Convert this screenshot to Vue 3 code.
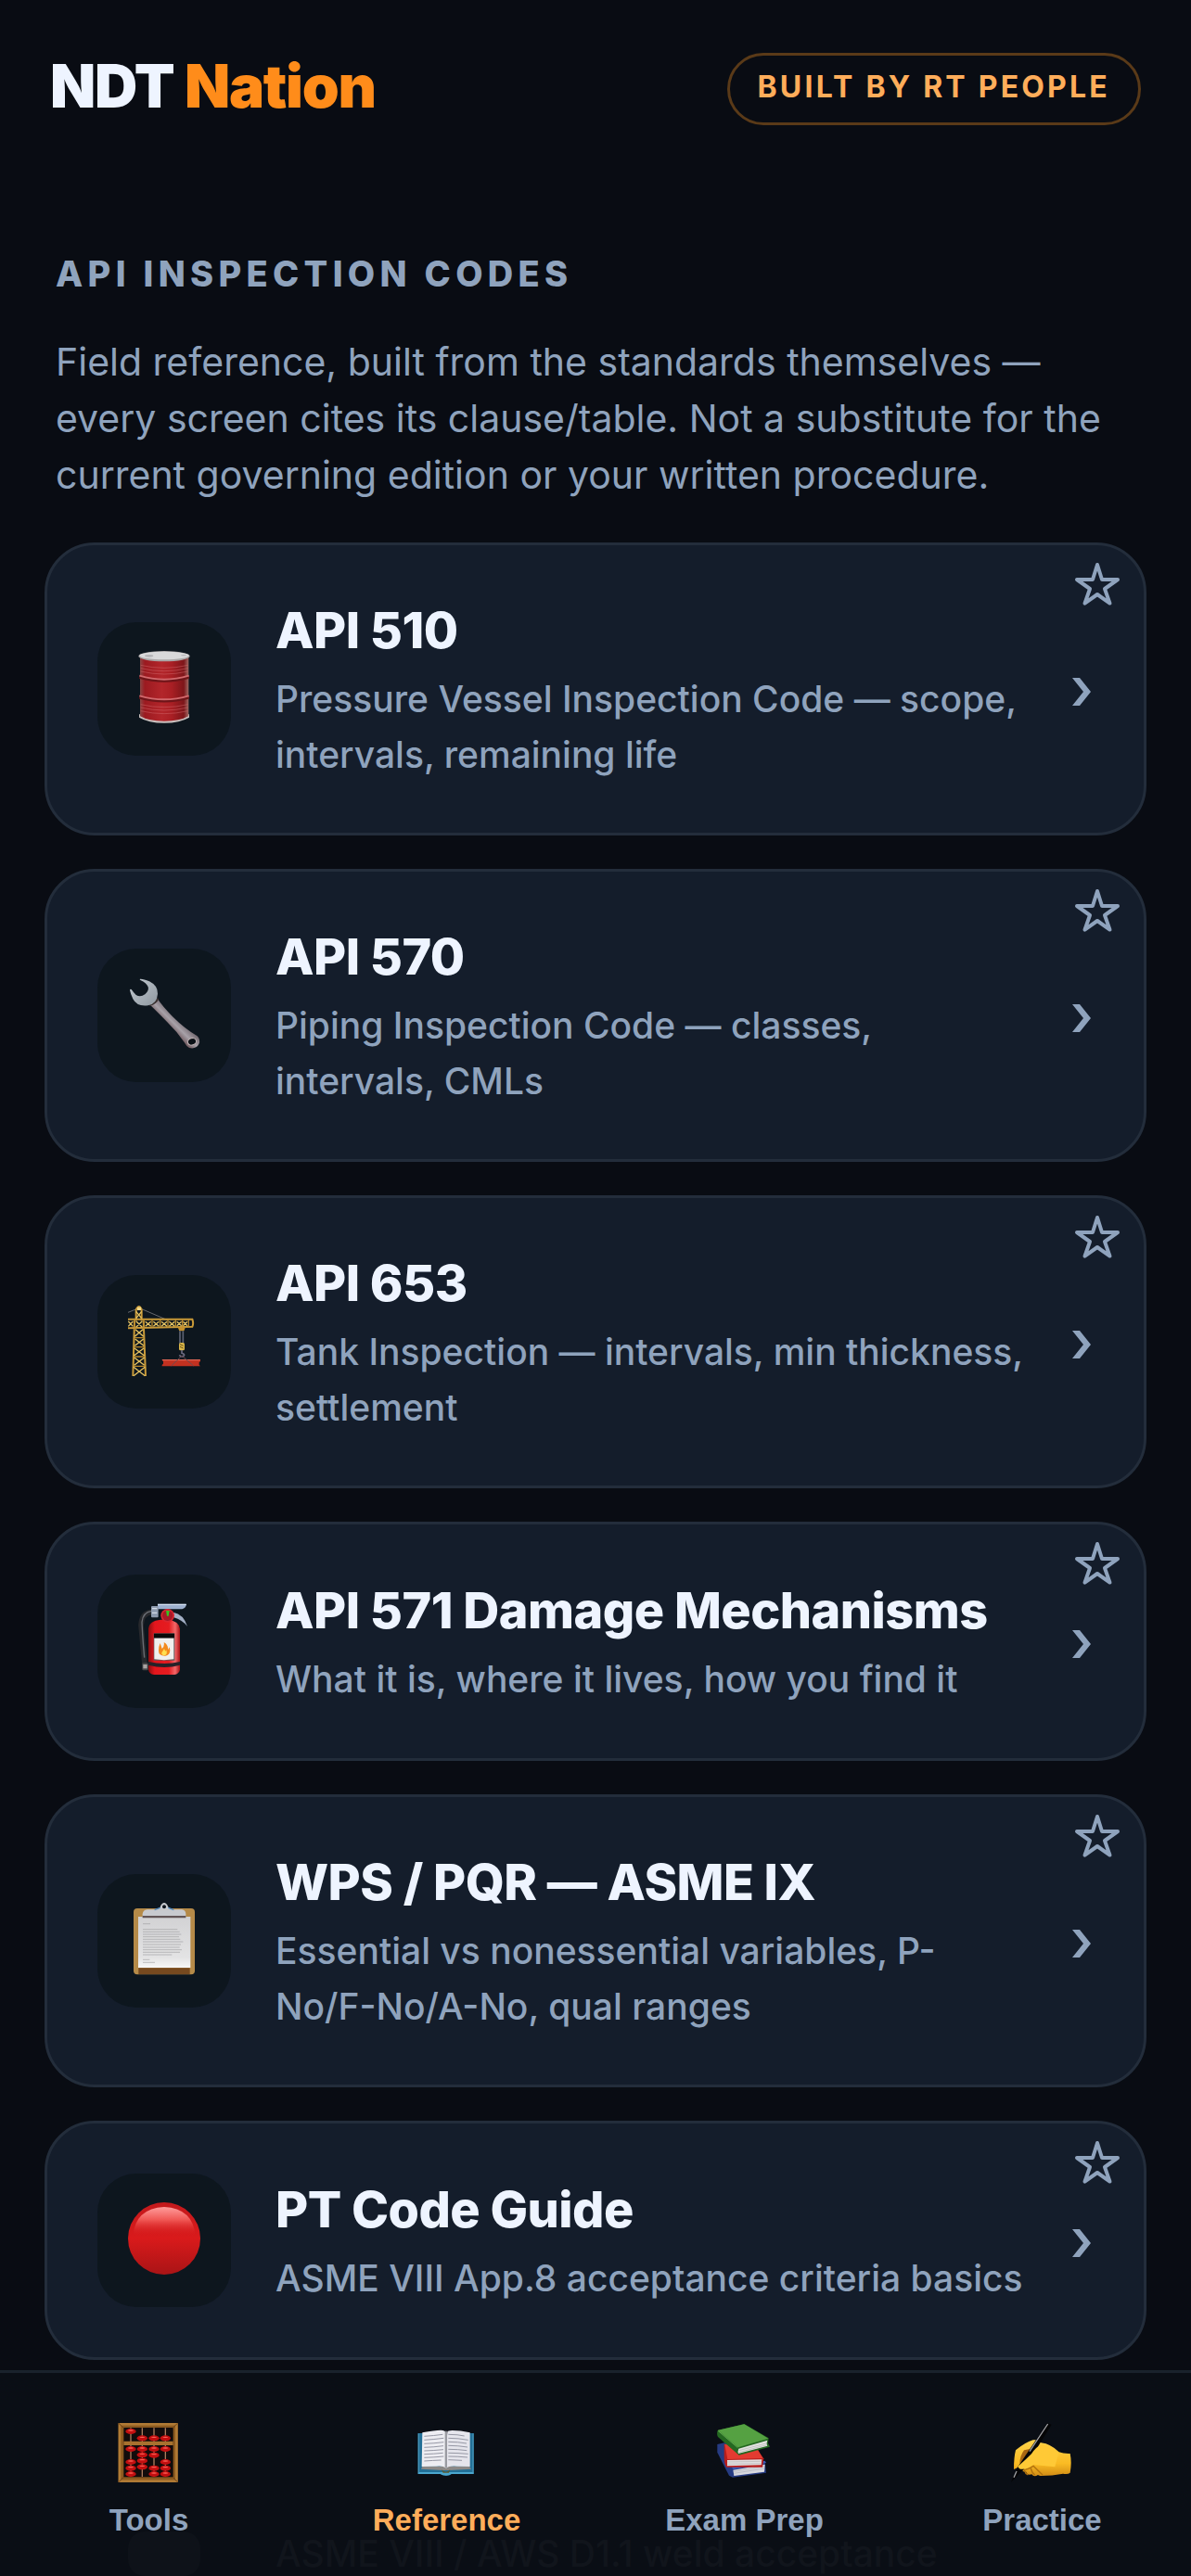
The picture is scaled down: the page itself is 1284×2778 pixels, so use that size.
<template>
    <div class="app">
        <header class="topbar">
            <h1 class="brand">NDT <span>Nation</span></h1>
            <span class="badge">BUILT BY RT PEOPLE</span>
        </header>

        <main class="content">
            <h2 class="section-title">API INSPECTION CODES</h2>
            <p class="intro">
                Field reference, built from the standards themselves — every screen cites its
                clause/table. Not a substitute for the current governing edition or your written procedure.
            </p>

            <ul class="cards">
                <li v-for="card in cards" :key="card.id" class="card">
                    <a class="card-link" :href="'#' + card.id">
                        <span class="tile">
                            <svg :viewBox="card.box" aria-hidden="true">
                                <g v-if="card.id === 'api-510'">
                                    <defs>
                                        <linearGradient id="drum" x1="0" x2="1" y1="0" y2="0">
                                            <stop offset="0" stop-color="#8b4544" />
                                            <stop offset="0.1" stop-color="#9b1a20" />
                                            <stop offset="0.45" stop-color="#b3262b" />
                                            <stop offset="0.65" stop-color="#a91f24" />
                                            <stop offset="0.9" stop-color="#7d161a" />
                                            <stop offset="1" stop-color="#a06a64" />
                                        </linearGradient>
                                    </defs>
                                    <path d="M330 604v10q30 18 81 18t81-18v-10z" fill="#c9bfbd" />
                                    <path d="M333 415h157v195q-28 16-79 16t-78-16z" fill="url(#drum)" />
                                    <g fill="none" stroke="#d06468" stroke-width="3" opacity="0.5">
                                        <path d="M335 445q76 18 153 0M335 455q76 18 153 0M335 465q76 18 153 0M335 572q76 18 153 0M335 582q76 18 153 0M335 593q76 18 153 0" />
                                    </g>
                                    <path d="M331 484q80 24 160 0M331 549q80 24 160 0" fill="none" stroke="#6e1519" stroke-width="9" />
                                    <path d="M331 479q80 24 160 0M331 544q80 24 160 0" fill="none" stroke="#d2686c" stroke-width="6" />
                                    <ellipse cx="411" cy="416" rx="83" ry="17" fill="#a9a5a5" />
                                    <ellipse cx="411" cy="414" rx="80" ry="13" fill="#d9d9da" />
                                    <ellipse cx="362" cy="415" rx="14" ry="4" fill="#b4b4b6" />
                                    <ellipse cx="474" cy="413" rx="9" ry="2" fill="#b4b4b6" />
                                </g>

                                <g v-else-if="card.id === 'api-570'">
                                    <defs>
                                        <linearGradient id="shaft" gradientUnits="userSpaceOnUse" x1="278" y1="330" x2="312" y2="296">
                                            <stop offset="0" stop-color="#6b5358" />
                                            <stop offset="0.5" stop-color="#a7a1a8" />
                                            <stop offset="1" stop-color="#746a71" />
                                        </linearGradient>
                                        <linearGradient id="jaw" x1="0" x2="1" y1="0" y2="1">
                                            <stop offset="0" stop-color="#c3cbd2" />
                                            <stop offset="1" stop-color="#8e979f" />
                                        </linearGradient>
                                    </defs>
                                    <path d="M214 250l26-18q14 22 48 57 40 40 80 63 12 12 5 26-9 17-31 12-10-6-16-18-25-36-55-65-34-35-57-57z" fill="url(#shaft)" />
                                    <path d="M213 252q22-6 28-22" fill="none" stroke="#39302f" stroke-width="6" />
                                    <path d="M183 167q10-1 30 8 28 14 27 40-2 32-31 38-36 5-49-21-8-18-10-29 1-5 5-2 6 9 15 18 14 8 29-2 14-12 10-24-5-13-25-22-3-2-1-4z" fill="url(#jaw)" />
                                    <ellipse cx="351" cy="370" rx="14" ry="11" fill="#0b1016" stroke="#c0b4b5" stroke-width="3" transform="rotate(-18 351 370)" />
                                </g>

                                <g v-else-if="card.id === 'api-653'">
                                    <path d="M144 163l33-13M186 151l86 37" fill="none" stroke="#66686d" stroke-width="3" />
                                    <path d="M170 190v-36q10-20 18 0v36M165 190l-5 179M194 190l7 179M144 185h208q5 15 0 24l-208 5" fill="none" stroke="#c99a38" stroke-width="6" />
                                    <g fill="none" stroke="#e6c463" stroke-width="4">
                                        <path d="M170 160l18 22M188 160l-18 22M168 218l26 23M192 218l-26 23M167 249l28 22M194 249l-28 22M165 279l32 24M195 279l-32 24M164 309l33 25M197 309l-33 25M162 340l37 28M199 340l-37 28" />
                                        <path d="M145 192l15 16M160 192l-15 16M170 191l20 20M190 191l-20 20M200 193l18 15M218 193l-18 15M226 193l18 15M244 193l-18 15M252 193l18 15M270 193l-18 15M277 193l18 15M295 193l-18 15M302 193l15 13M317 193l-15 13M322 193l14 13M336 193l-14 13" />
                                    </g>
                                    <path d="M166 214h28M165 245h31M164 275h33M163 306h35M162 337h37M165 186v26M195 186v26M222 186v25M248 186v24M273 186v24M298 186v23M320 186v23M340 186v23" fill="none" stroke="#b98a2e" stroke-width="4" />
                                    <path d="M174 146h12v10h-12z" fill="#f1d98a" />
                                    <path d="M305 211h25l-5 12h-15z" fill="#c4912c" />
                                    <path d="M312 223v42M322 223v42" stroke="#5d6272" stroke-width="5" />
                                    <rect x="309" y="261" width="18" height="25" rx="5" fill="#d9b64a" />
                                    <path d="M312 266l11 5M312 274l11 5" stroke="#6d5516" stroke-width="3" />
                                    <path d="M318 285v10q12 4 6 9-8 4-14-3" fill="none" stroke="#6b6a80" stroke-width="5" />
                                    <path d="M254 315h124v6l-4 4v8l4 4H254v-4l4-4v-8l-4-4z" fill="#c23120" />
                                    <path d="M255 317h122" stroke="#e2705d" stroke-width="3" />
                                    <path d="M318 303l-34 33M318 303l38 33" stroke="#6d4a50" stroke-width="3" />
                                </g>

                                <g v-else-if="card.id === 'api-571'">
                                    <defs>
                                        <linearGradient id="tank" x1="0" x2="1" y1="0" y2="0">
                                            <stop offset="0" stop-color="#8d0d10" />
                                            <stop offset="0.2" stop-color="#e3161d" />
                                            <stop offset="0.65" stop-color="#e51c20" />
                                            <stop offset="0.85" stop-color="#f2686a" />
                                            <stop offset="1" stop-color="#a80f14" />
                                        </linearGradient>
                                    </defs>
                                    <path d="M222 175q-34 2-36 44 6 60 12 125" fill="none" stroke="#26282c" stroke-width="17" />
                                    <path d="M220 172q-28 4-31 36 2 50 8 115" fill="none" stroke="#6b6e74" stroke-width="4" />
                                    <rect x="190" y="340" width="19" height="24" rx="4" fill="#49484a" />
                                    <rect x="193" y="345" width="13" height="13" fill="#a8a3a2" />
                                    <path d="M290 176q34 6 46 46-14-20-46-30z" fill="#a3afc5" />
                                    <path d="M240 150h93q-2 13-14 16h-79z" fill="#9db0ce" />
                                    <path d="M240 151h92" stroke="#d5e2f4" stroke-width="4" />
                                    <path d="M210 230q2-27 40-30h24q35 4 38 30v132q-3 13-18 16h-66q-16-3-18-16z" fill="url(#tank)" />
                                    <rect x="219" y="156" width="23" height="37" rx="3" fill="#8d9aae" />
                                    <path d="M222 164h16M222 178h16" stroke="#d1dae6" stroke-width="4" />
                                    <circle cx="272" cy="187" r="22" fill="#da2630" />
                                    <circle cx="272" cy="187" r="17" fill="#a81828" />
                                    <path d="M267 171h11l-3 17h-5z" fill="#36c421" />
                                    <path d="M210 336q52 12 102 0v11q-50 14-102 0z" fill="#262228" />
                                    <rect x="227" y="244" width="68" height="88" fill="#5b5b5d" />
                                    <path d="M228 245h66v14h-66z" fill="#090909" />
                                    <path d="M229 260h63v68q-32 5-63 0z" fill="#f0efed" />
                                    <path d="M244 288l4-12 6 18q9-9 6-21 15 8 13 25l5-9q7 24-13 28-22 1-22-16z" fill="#f38a1c" />
                                    <path d="M253 307l8-13 4 8 3-4q5 17-7 18-9-1-8-9z" fill="#ffdf4f" />
                                </g>

                                <g v-else-if="card.id === 'wps-pqr'">
                                    <defs>
                                        <linearGradient id="sheet" x1="0" x2="0" y1="0" y2="1">
                                            <stop offset="0" stop-color="#d2d2d4" />
                                            <stop offset="0.8" stop-color="#e3e3e4" />
                                            <stop offset="1" stop-color="#f7f7f7" />
                                        </linearGradient>
                                    </defs>
                                    <rect x="162" y="168" width="198" height="214" rx="12" fill="#b58a48" />
                                    <path d="M178 361h166v20H178z" fill="#76491f" />
                                    <rect x="177" y="195" width="169" height="165" fill="url(#sheet)" />
                                    <path d="M192 218h24M192 236h112M192 244h119M192 252h124M192 260h117M192 268h121M192 276h130M192 285h123M192 294h119M192 302h126M192 310h120M192 318h94M192 334h22M192 343h39" stroke="#a2a2a4" stroke-width="2" />
                                    <path d="M191 197v-10q1-14 15-15h112q13 1 13 15v10z" fill="#c8cacf" />
                                    <path d="M191 192h140v7H191z" fill="#625557" />
                                    <path d="M232 173q15-3 17-12 5-11 12-11t12 11q4 9 17 12z" fill="#c8cbd0" />
                                    <path d="M230 173l18-7M292 173l-18-7" stroke="#528bc2" stroke-width="4" />
                                    <circle cx="261" cy="163" r="6" fill="#0d151d" />
                                </g>

                                <g v-else>
                                    <defs>
                                        <linearGradient id="ball" x1="0" x2="0" y1="0" y2="1">
                                            <stop offset="0" stop-color="#c3191c" />
                                            <stop offset="0.5" stop-color="#d91a1b" />
                                            <stop offset="1" stop-color="#a91416" />
                                        </linearGradient>
                                        <linearGradient id="shine" x1="0" x2="0" y1="0" y2="1">
                                            <stop offset="0" stop-color="#ff9c9b" />
                                            <stop offset="0.45" stop-color="#f05754" />
                                            <stop offset="1" stop-color="#da1a1b" stop-opacity="0" />
                                        </linearGradient>
                                    </defs>
                                    <circle cx="261" cy="249" r="117" fill="url(#ball)" />
                                    <path d="M160 240q8-88 101-93 93 5 101 93z" fill="url(#shine)" />
                                </g>
                            </svg>
                        </span>
                        <span class="card-body">
                            <strong>{{ card.title }}</strong>
                            <span class="card-text">{{ card.text }}</span>
                        </span>
                        <svg class="chevron" viewBox="0 0 20 30" aria-hidden="true">
                            <path d="M0 0h8l12 15L8 30H0l12-15z" />
                        </svg>
                    </a>
                    <button class="star" type="button" :aria-label="'Save ' + card.title" @click="toggle(card.id)">
                        <svg :class="{ saved: saved.includes(card.id) }" viewBox="-27 -27 54 54" aria-hidden="true">
                            <path d="M0-23 5-7H22L8 3 13.500 18.600 0 9-13.500 18.600-8 3-22-7H-5z" />
                        </svg>
                    </button>
                </li>
            </ul>
        </main>

        <nav class="tabbar">
            <div class="peek" aria-hidden="true">
                <span class="peek-tile"></span>
                <span>ASME VIII / AWS D1.1 weld acceptance</span>
            </div>
            <a
                v-for="tab in tabs"
                :key="tab.id"
                :href="'#' + tab.id"
                class="tab"
                :class="{ active: tab.id === activeTab }"
                @click="activeTab = tab.id"
            >
                <svg :viewBox="tab.box" aria-hidden="true">
                    <g v-if="tab.id === 'tools'">
                        <rect x="51" y="69" width="192" height="192" fill="#8c5a20" />
                        <rect x="55" y="73" width="184" height="184" fill="none" stroke="#b07a35" stroke-width="8" />
                        <rect x="68" y="84" width="160" height="160" fill="#120c0b" />
                        <path d="M52 70l16 15M242 70l-15 15M52 260l16-16M242 260l-15-16" stroke="#6d4215" stroke-width="3" />
                        <path d="M91 85v158M128 85v158M166 85v158M203 85v158" stroke="#ac7b5c" stroke-width="4" />
                        <path d="M68 128h160v13H68z" fill="#a8712e" />
                        <g v-for="bead in beads" :key="bead.join()">
                            <ellipse :cx="bead[0]" :cy="bead[1]" rx="17" ry="9" fill="#c20f10" />
                            <ellipse :cx="bead[0]" :cy="bead[1] - 3" rx="9" ry="2" fill="#ff6257" />
                        </g>
                    </g>

                    <g v-else-if="tab.id === 'reference'">
                        <path d="M1020 102h180v132h-72q-5 5-17 5t-19-5h-72z" fill="#236f96" />
                        <path d="M1020 228h180v6h-72q-5 5-17 5t-19-5h-72z" fill="#4aa6cd" />
                        <path d="M1022 103v126M1198 103v126" stroke="#4594b8" stroke-width="4" />
                        <path d="M1030 218l4-9h152l6 9-70 4h-22z" fill="#8b8987" />
                        <path d="M1096 220q14 14 28 0l-4 10h-19z" fill="#5c5a2e" />
                        <path d="M1034 100q40-8 60-8 13 1 17 8v115q-11-9-32-6l-47 1z" fill="#ededf2" />
                        <path d="M1111 100q6-7 20-7 26 0 57 7v110l-42-1q-26-2-35 6z" fill="#e5e5ec" />
                        <path d="M1105 94q6 4 6 18v104q0-109 6-121z" fill="#77787f" />
                        <path d="M1107 98h7v116h-7z" fill="#9a9ba2" />
                        <path d="M1040 112q32-2 60-6M1040 124q32-2 63-6M1040 136q32-1 63-5M1040 148q32-1 62-5M1040 159q32-1 62-4M1040 170q32-1 61-4M1040 181q32-1 63-4M1040 192q28-2 55-3M1118 106q32 0 52 5M1118 118q32 0 64 6M1118 130q32 0 59 5M1118 142q32 0 62 5M1118 154q32 0 60 4M1118 166q32 0 64 3M1118 177q32 0 62 3M1118 188q24 1 44 2" fill="none" stroke="#9698a5" stroke-width="3" />
                    </g>

                    <g v-else-if="tab.id === 'exam'">
                        <path d="M68 138l26-6 128 66 4 32-108 15-12-6-38-75z" fill="#263b82" />
                        <path d="M113 210l109-19 4 7-106 21z" fill="#3f5bb4" />
                        <path d="M119 221l103-18-2 24-98 13z" fill="#d8d8de" />
                        <path d="M122 232l98-16M121 226l99-17" stroke="#adafb8" stroke-width="2" />
                        <path d="M90 137l103 13 25 34-4 28H98q-8-10-8-33z" fill="#b81e1c" />
                        <path d="M92 138l102 8 21 37-114 3z" fill="#e33b31" />
                        <path d="M100 189l112-2-2 18-110 3z" fill="#e1dfdf" />
                        <path d="M100 195l110-2M100 202l110-2" stroke="#b9b5b5" stroke-width="2" />
                        <path d="M69 93l86-21 79 46-2 16 6 12-100 27-68-59q-5-8-1-21z" fill="#246821" />
                        <path d="M70 92l85-19 78 46-98 29z" fill="#55a142" />
                        <path d="M137 152l93-27q-5 10 0 18l-94 25q-3-7 1-16z" fill="#e4e4e2" />
                        <path d="M138 158l91-24M137 164l92-24" stroke="#b2b5b1" stroke-width="2" />
                        <path d="M70 94l64 55" stroke="#79c160" stroke-width="2" />
                    </g>

                    <g v-else>
                        <defs>
                            <linearGradient id="hand" x1="0" x2="0" y1="0" y2="1">
                                <stop offset="0" stop-color="#ffd34b" />
                                <stop offset="0.65" stop-color="#fabb23" />
                                <stop offset="1" stop-color="#d18b15" />
                            </linearGradient>
                        </defs>
                        <path d="M1027 219q0-38 6-62 30-25 56-33 18-3 26 9 32 4 58 30 15 6 36 5 6 29 0 62-7 6-23 3-34 7-73 7-6-1-8-3-13 9-20-2-15 5-19-9-8 3-12-5-9-1-14-8z" fill="url(#hand)" />
                        <path d="M1060 157q-13 18-14 43l33-30 14-20z" fill="#a86612" />
                        <path d="M1046 220q20 4 44-12 18 18 30 29M1061 222q3 11 12 15M1082 216q4 15 13 21" fill="none" stroke="#b1720e" stroke-width="4" />
                        <path d="M1135 70l14 4-88 143-43 43 21-48z" fill="#050506" />
                        <path d="M1137 72l-59 89M1036 225l-9 20" stroke="#a0a1a5" stroke-width="4" />
                        <path d="M1042 208q19-16 42-39 15-24 35-31 30 5 53 28l-12 45-70-7q-20 17-42 14-10-4-6-10z" fill="#ffc936" />
                    </g>
                </svg>
                <span>{{ tab.label }}</span>
            </a>
        </nav>
    </div>
</template>

<script setup>
import { ref } from 'vue'

const cards = [
    { id: 'api-510', title: 'API 510', text: 'Pressure Vessel Inspection Code — scope, intervals, remaining life', box: '195 306 432 432' },
    { id: 'api-570', title: 'API 570', text: 'Piping Inspection Code — classes, intervals, CMLs', box: '45 69 432 432' },
    { id: 'api-653', title: 'API 653', text: 'Tank Inspection — intervals, min thickness, settlement', box: '45 42 432 432' },
    { id: 'api-571', title: 'API 571 Damage Mechanisms', text: 'What it is, where it lives, how you find it', box: '45 54 432 432' },
    { id: 'wps-pqr', title: 'WPS / PQR — ASME IX', text: 'Essential vs nonessential variables, P-No/F-No/A-No, qual ranges', box: '45 57 432 432' },
    { id: 'pt-code', title: 'PT Code Guide', text: 'ASME VIII App.8 acceptance criteria basics', box: '45 39 432 432' },
]

const tabs = [
    { id: 'tools', label: 'Tools', box: '43 57 216 216' },
    { id: 'reference', label: 'Reference', box: '1006 57 216 216' },
    { id: 'exam', label: 'Exam Prep', box: '49 57 216 216' },
    { id: 'practice', label: 'Practice', box: '1012 57 216 216' },
]

// abacus beads, [x, y]
const beads = [
    [91, 96], [128, 118], [166, 118], [203, 118],
    [91, 153], [91, 195], [91, 215], [91, 234],
    [128, 153], [128, 172], [128, 191], [128, 211],
    [166, 153], [166, 173], [166, 215], [166, 234],
    [203, 153], [203, 195], [203, 215], [203, 234],
]

const activeTab = ref('reference')
const saved = ref([])

const toggle = (id) => {
    saved.value = saved.value.includes(id)
        ? saved.value.filter(item => item !== id)
        : [...saved.value, id]
}
</script>

<style>
body {
    margin: 0;
    background: #090c13;
}
</style>

<style scoped>
.app {
    display: flex;
    flex-direction: column;
    min-height: 100vh;
    background: #090c13;
    color: #8fa3bd;
    font-family: Inter, "Liberation Sans", sans-serif;
}
.topbar {
    display: flex;
    justify-content: space-between;
    align-items: flex-start;
    padding: 57px 54px;
}
.brand {
    margin: 0;
    font-size: 64px;
    line-height: 72px;
    font-weight: 900;
    letter-spacing: -0.02em;
    color: #eef4ff;
}
.brand span {
    color: #ff8c1a;
}
.badge {
    padding: 14px 30px 18px;
    border: 3px solid #5a3a18;
    border-radius: 40px;
    font-size: 32px;
    line-height: 40px;
    font-weight: 700;
    letter-spacing: 0.1em;
    color: #ffad5a;
}
.content {
    padding: 79px 48px 11px;
}
.section-title {
    margin: 0 12px 41px;
    font-size: 38px;
    line-height: 48px;
    font-weight: 800;
    letter-spacing: 0.14em;
}
.intro {
    margin: 0 12px 42px;
    font-size: 41px;
    line-height: 61px;
}
.cards {
    display: flex;
    flex-direction: column;
    gap: 36px;
    margin: 0;
    padding: 0;
    list-style: none;
}
.card {
    position: relative;
    border: 3px solid #232d3b;
    border-radius: 54px;
    background: #141d2b;
}
.card-link {
    display: flex;
    align-items: center;
    gap: 48px;
    padding: 54px 57px 54px 54px;
    color: inherit;
    text-decoration: none;
}
.tile {
    flex: none;
    width: 144px;
    height: 144px;
    border-radius: 42px;
    background: #0d161e;
}
.tile svg {
    display: block;
    width: 100%;
    height: 100%;
}
.card-body {
    flex: 1;
    display: flex;
    flex-direction: column;
    gap: 7px;
}
.card-body strong {
    font-size: 54px;
    line-height: 75px;
    font-weight: 800;
    letter-spacing: -0.01em;
    color: #eef4ff;
}
.card-text {
    font-size: 39px;
    line-height: 60px;
    font-weight: 450;
}
.chevron {
    flex: none;
    width: 20px;
    height: 30px;
    margin-top: 6px;
    fill: #8fa3bd;
}
.star {
    position: absolute;
    top: 17px;
    right: 23px;
    padding: 0;
    border: 0;
    background: none;
    cursor: pointer;
}
.star svg {
    display: block;
    width: 54px;
    height: 54px;
    fill: none;
    stroke: #8fa3bd;
    stroke-width: 4;
    stroke-linejoin: round;
}
.star .saved {
    fill: #8fa3bd;
}
.tabbar {
    position: sticky;
    bottom: 0;
    display: grid;
    grid-template-columns: repeat(4, 1fr);
    margin-top: auto;
    padding: 50px 0 41px;
    border-top: 3px solid #1a222c;
    background: #0a0e15;
    overflow: hidden;
}
.tab {
    position: relative;
    display: flex;
    flex-direction: column;
    align-items: center;
    gap: 18px;
    font-family: "Liberation Sans", Arial, sans-serif;
    font-size: 33px;
    line-height: 38px;
    font-weight: 700;
    color: #8fa3bd;
    text-decoration: none;
}
.tab.active {
    color: #ffad5a;
}
.tab svg {
    width: 72px;
    height: 72px;
}
/* next card showing faintly through the bar */
.peek {
    position: absolute;
    left: 138px;
    bottom: 0;
    display: flex;
    align-items: center;
    gap: 81px;
    font-size: 39px;
    line-height: 48px;
    font-weight: 450;
    color: #11151c;
}
.peek-tile {
    width: 78px;
    height: 48px;
    border-radius: 18px;
    background: #0e1219;
}
</style>
